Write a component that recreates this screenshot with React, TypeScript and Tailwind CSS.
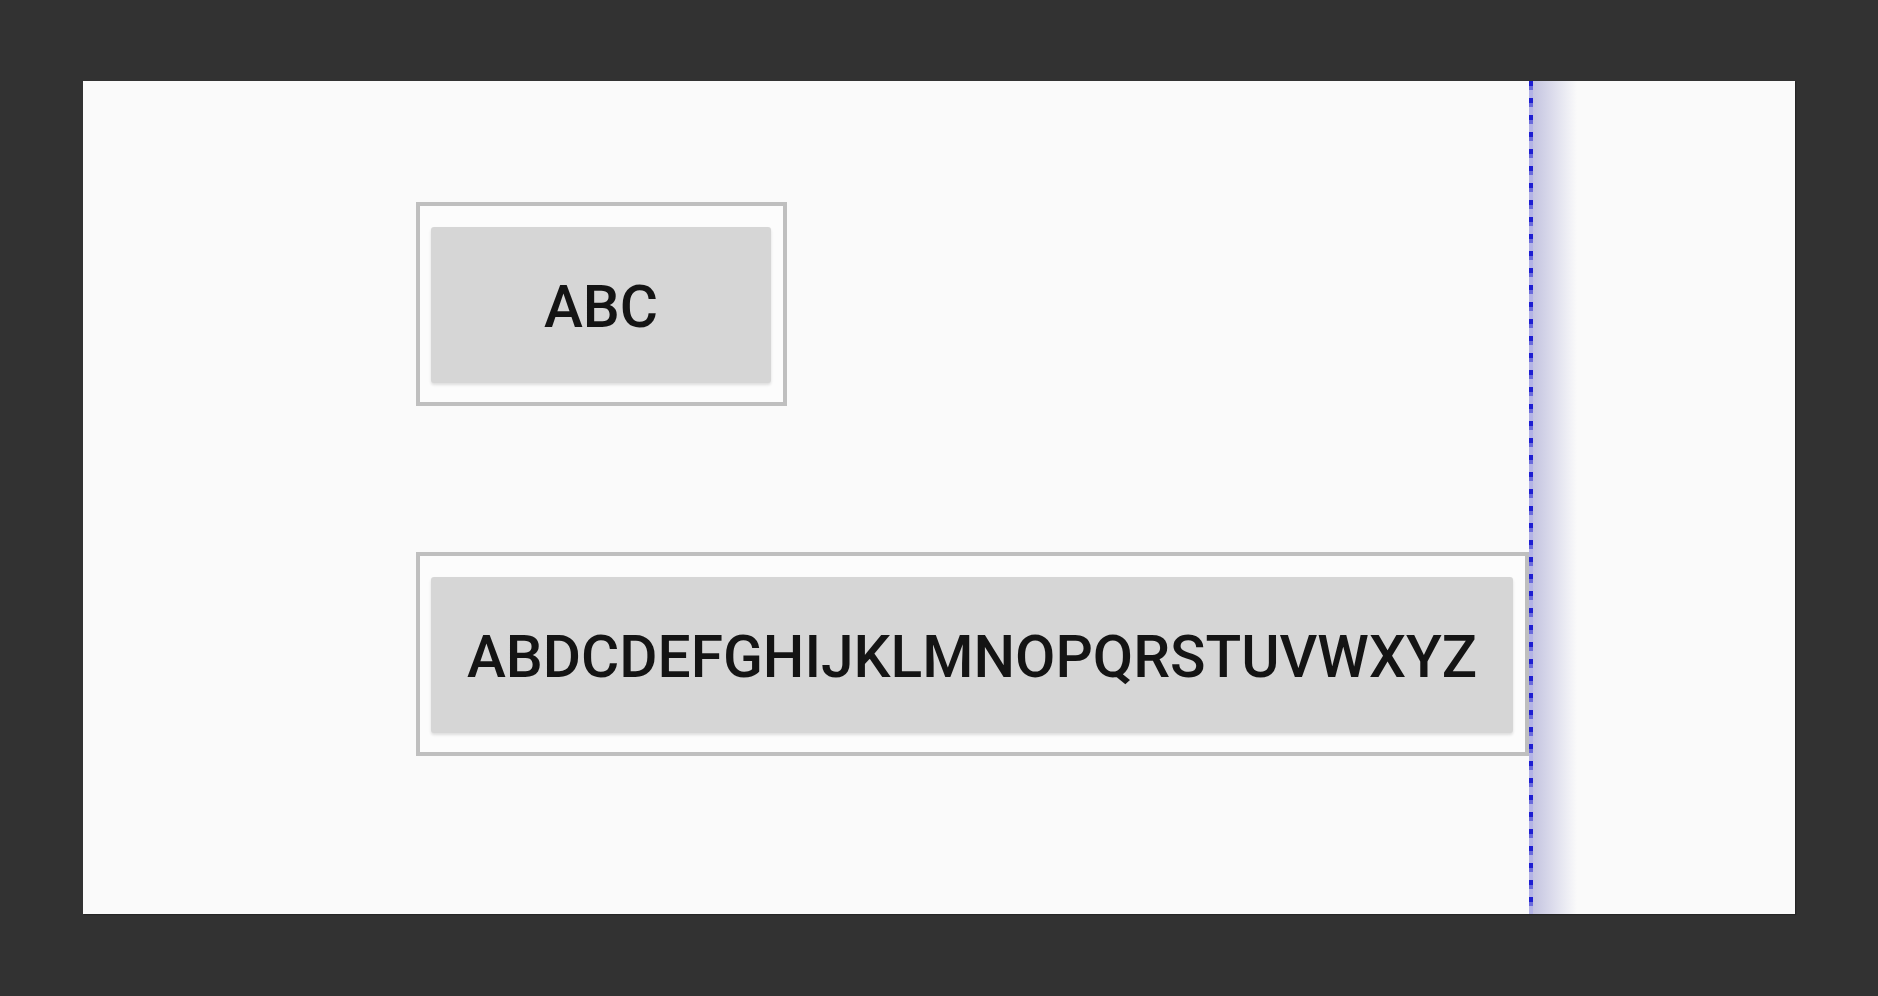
import React from 'react';

const FONT = { fontFamily: 'Roboto, "Liberation Sans", sans-serif' };

interface PreviewButtonProps {
  label: string;
  width: string;
}

// A bordered box wrapping a grey Android-style button
const PreviewButton: React.FC<PreviewButtonProps> = ({ label, width }) => (
  <div className="border-4 border-[#bfbfbf] bg-[#fcfcfc] pl-[11px] pr-[12px] pt-[21px] pb-[19px]">
    <div
      className={`${width} h-[156px] pt-[4px] flex items-center justify-center rounded-[3px] bg-[#d6d6d6] shadow-[0_2px_3px_rgba(0,0,0,0.12)] text-[58.6px] font-medium leading-none text-[#141414] whitespace-nowrap`}
      style={FONT}
    >
      {label}
    </div>
  </div>
);

export default function App() {
  return (
    <div className="w-[1878px] h-[996px] bg-[#323232] pt-[81px] pl-[83px] overflow-hidden">
      <div className="relative w-[1712px] h-[833px] bg-[#fafafa] shadow-[1px_1px_1px_rgba(0,0,0,0.25)]">
        <div className="flex flex-col items-start gap-[146px] pl-[333px] pt-[121px]">
          <PreviewButton label="ABC" width="w-[340px]" />
          <PreviewButton label="ABDCDEFGHIJKLMNOPQRSTUVWXYZ" width="w-[1082px]" />
        </div>

        {/* layout guide on the right edge of the wide button */}
        <div className="absolute top-0 bottom-0 left-[1446px] flex">
          <div className="w-[4px] h-full bg-[repeating-linear-gradient(to_bottom,#1e1ed2_0px,#1e1ed2_5px,#6a6adc_5px,#6a6adc_9px,#b4b4e6_9px,#b4b4e6_17px)]" />
          <div className="w-[44px] h-full bg-gradient-to-r from-[#c4c4e0] to-[#fafafa]" />
        </div>
      </div>
    </div>
  );
}
